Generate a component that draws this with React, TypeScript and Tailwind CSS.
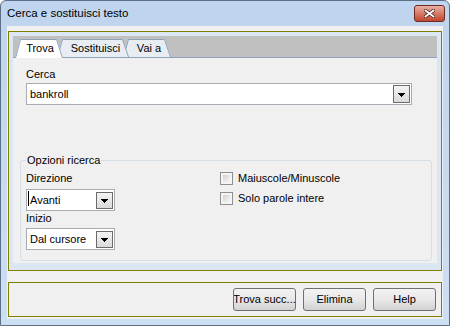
import React from 'react';

const Arrow = () => (
  <svg width="7" height="4" viewBox="0 0 7 4" shapeRendering="crispEdges">
    <rect x="0" y="0" width="7" height="1" fill="#000" />
    <rect x="1" y="1" width="5" height="1" fill="#000" />
    <rect x="2" y="2" width="3" height="1" fill="#000" />
    <rect x="3" y="3" width="1" height="1" fill="#000" />
  </svg>
);

const Combo = ({ value, wide, caret }: { value: string; wide?: boolean; caret?: boolean }) => (
  <div
    className={
      wide
        ? 'flex h-[22px] w-[386px] items-center border border-[#a9adb3] bg-white'
        : 'flex h-[22px] w-[89px] items-center border border-[#a9adb3] bg-white'
    }
  >
    <span className="relative flex items-center pl-[3px] text-black">
      {caret && <span className="absolute left-[1px] top-[-1px] h-[15px] w-px bg-black" />}
      {value}
    </span>
    <div
      className={
        wide
          ? 'ml-auto mr-px flex h-[18px] w-[17px] items-center justify-center border border-[#6b6b6b] bg-gradient-to-b from-[#f4f4f4] to-[#dadada] pt-[2px]'
          : 'ml-auto mr-px flex h-[17px] w-[17px] items-center justify-center border border-[#6b6b6b] bg-gradient-to-b from-[#f4f4f4] to-[#dadada] pt-[2px]'
      }
    >
      <Arrow />
    </div>
  </div>
);

const Check = ({ label }: { label: string }) => (
  <div className="flex h-[13px] items-center gap-[5px]">
    <div className="h-[13px] w-[13px] border border-[#8f8f8f] bg-[#f4f4f4] p-[2px]">
      <div className="h-full w-full bg-gradient-to-br from-[#d2d2d2] to-[#f6f6f6]" />
    </div>
    <span>{label}</span>
  </div>
);

const tabs = [
  { label: 'Trova', w: 48, active: true, cls: 'relative z-30 ml-[2px] -mb-px flex h-[19px] w-[48px] items-center justify-center pl-[2px] pb-[1px]' },
  { label: 'Sostituisci', w: 72, active: false, cls: 'relative z-20 -ml-[6px] flex h-[18px] w-[72px] items-center justify-center pl-[5px]' },
  { label: 'Vai a', w: 48, active: false, cls: 'relative z-10 -ml-[6px] flex h-[18px] w-[48px] items-center justify-center pl-[4px]' },
];

const Tab = ({ label, w, active, cls }: { label: string; w: number; active: boolean; cls: string }) => {
  const h = active ? 19 : 18;
  return (
    <div className={cls}>
      <svg className="absolute inset-0" width={w} height={h}>
        <polygon points={`0,${h} 5,0.5 ${w - 6},0.5 ${w},${h}`} fill={active ? '#ffffff' : '#e8edf3'} />
        <polyline
          points={`0.5,${h} 5.5,0.5 ${w - 6.5},0.5 ${w - 0.5},${h}`}
          fill="none"
          stroke="#8ea3b9"
          strokeWidth="1"
        />
      </svg>
      <span className="relative">{label}</span>
    </div>
  );
};

export default function App() {
  return (
    <div className="flex h-[326px] w-[450px] flex-col overflow-hidden rounded-t-[6px] border border-[#5d6f86] bg-gradient-to-b from-[#bfd4ee] to-[#cddff3] font-['Liberation_Sans',sans-serif] text-[11px] text-black">
      {/* title bar */}
      <div className="flex h-[25px] shrink-0 items-center justify-between pl-[6px] pr-[4px]">
        <span className="text-[11.5px] text-black">Cerca e sostituisci testo</span>
        <div className="flex h-[17px] w-[31px] items-center justify-center rounded-[3px] border border-[#6e2b22] bg-gradient-to-b from-[#e9b0a3] via-[#d57a66] to-[#c24430]">
          <svg width="11" height="9" viewBox="0 0 11 9">
            <path d="M1.5 1.5l8 6M9.5 1.5l-8 6" stroke="#4a1d17" strokeWidth="3.4" strokeLinecap="square" />
            <path d="M1.5 1.5l8 6M9.5 1.5l-8 6" stroke="#ffffff" strokeWidth="1.8" strokeLinecap="square" />
          </svg>
        </div>
      </div>

      {/* client */}
      <div className="mx-[6px] mb-[6px] flex flex-1 flex-col gap-[11px] bg-[#f0f0f0] px-px pb-[2px] pt-[5px]">
        <div className="flex flex-1 flex-col border border-[#808000] bg-[#dce7f4] p-[4px] pb-[7px]">
          {/* tab strip */}
          <div className="flex h-[21px] shrink-0 items-end bg-[#c0c0c0]">
            {tabs.map((t) => (
              <Tab key={t.label} {...t} />
            ))}
          </div>
          {/* page */}
          <div className="flex flex-1 flex-col border-t border-[#8ea3b9] bg-[#f0f0f0] pl-[7px] pr-[5px] pt-[9px]">
            <div className="pl-[6px]">
              <div className="h-[14px] leading-[14px]">Cerca</div>
              <div className="mt-[2px]">
                <Combo value="bankroll" wide />
              </div>
            </div>

            <div className="relative mt-[55px] flex h-[101px] rounded-[3px] border border-[#d5dfe5] pl-[5px] pt-[10px]">
              <span className="absolute left-[5px] top-[-8px] bg-[#f0f0f0] px-[1px] leading-[14px]">Opzioni ricerca</span>
              <div className="flex w-[194px] flex-col">
                <div className="h-[14px] leading-[14px]">Direzione</div>
                <div className="mt-[4px]">
                  <Combo value="Avanti" caret />
                </div>
                <div className="h-[14px] leading-[14px]">Inizio</div>
                <div className="mt-[3px]">
                  <Combo value="Dal cursore" />
                </div>
              </div>
              <div className="flex flex-col gap-[7px] pt-[1px]">
                <Check label="Maiuscole/Minuscole" />
                <Check label="Solo parole intere" />
              </div>
            </div>
          </div>
        </div>

        {/* buttons */}
        <div className="flex h-[35px] shrink-0 items-center justify-end gap-[7px] border border-[#808000] pr-[5px]">
          {['Trova succ...', 'Elimina', 'Help'].map((b) => (
            <div
              key={b}
              className="flex h-[23px] w-[63px] items-center justify-center overflow-hidden whitespace-nowrap rounded-[3px] border border-[#707070] bg-gradient-to-b from-[#f3f3f3] via-[#e8e8e8] to-[#d2d2d2]"
            >
              {b}
            </div>
          ))}
        </div>
      </div>
    </div>
  );
}
